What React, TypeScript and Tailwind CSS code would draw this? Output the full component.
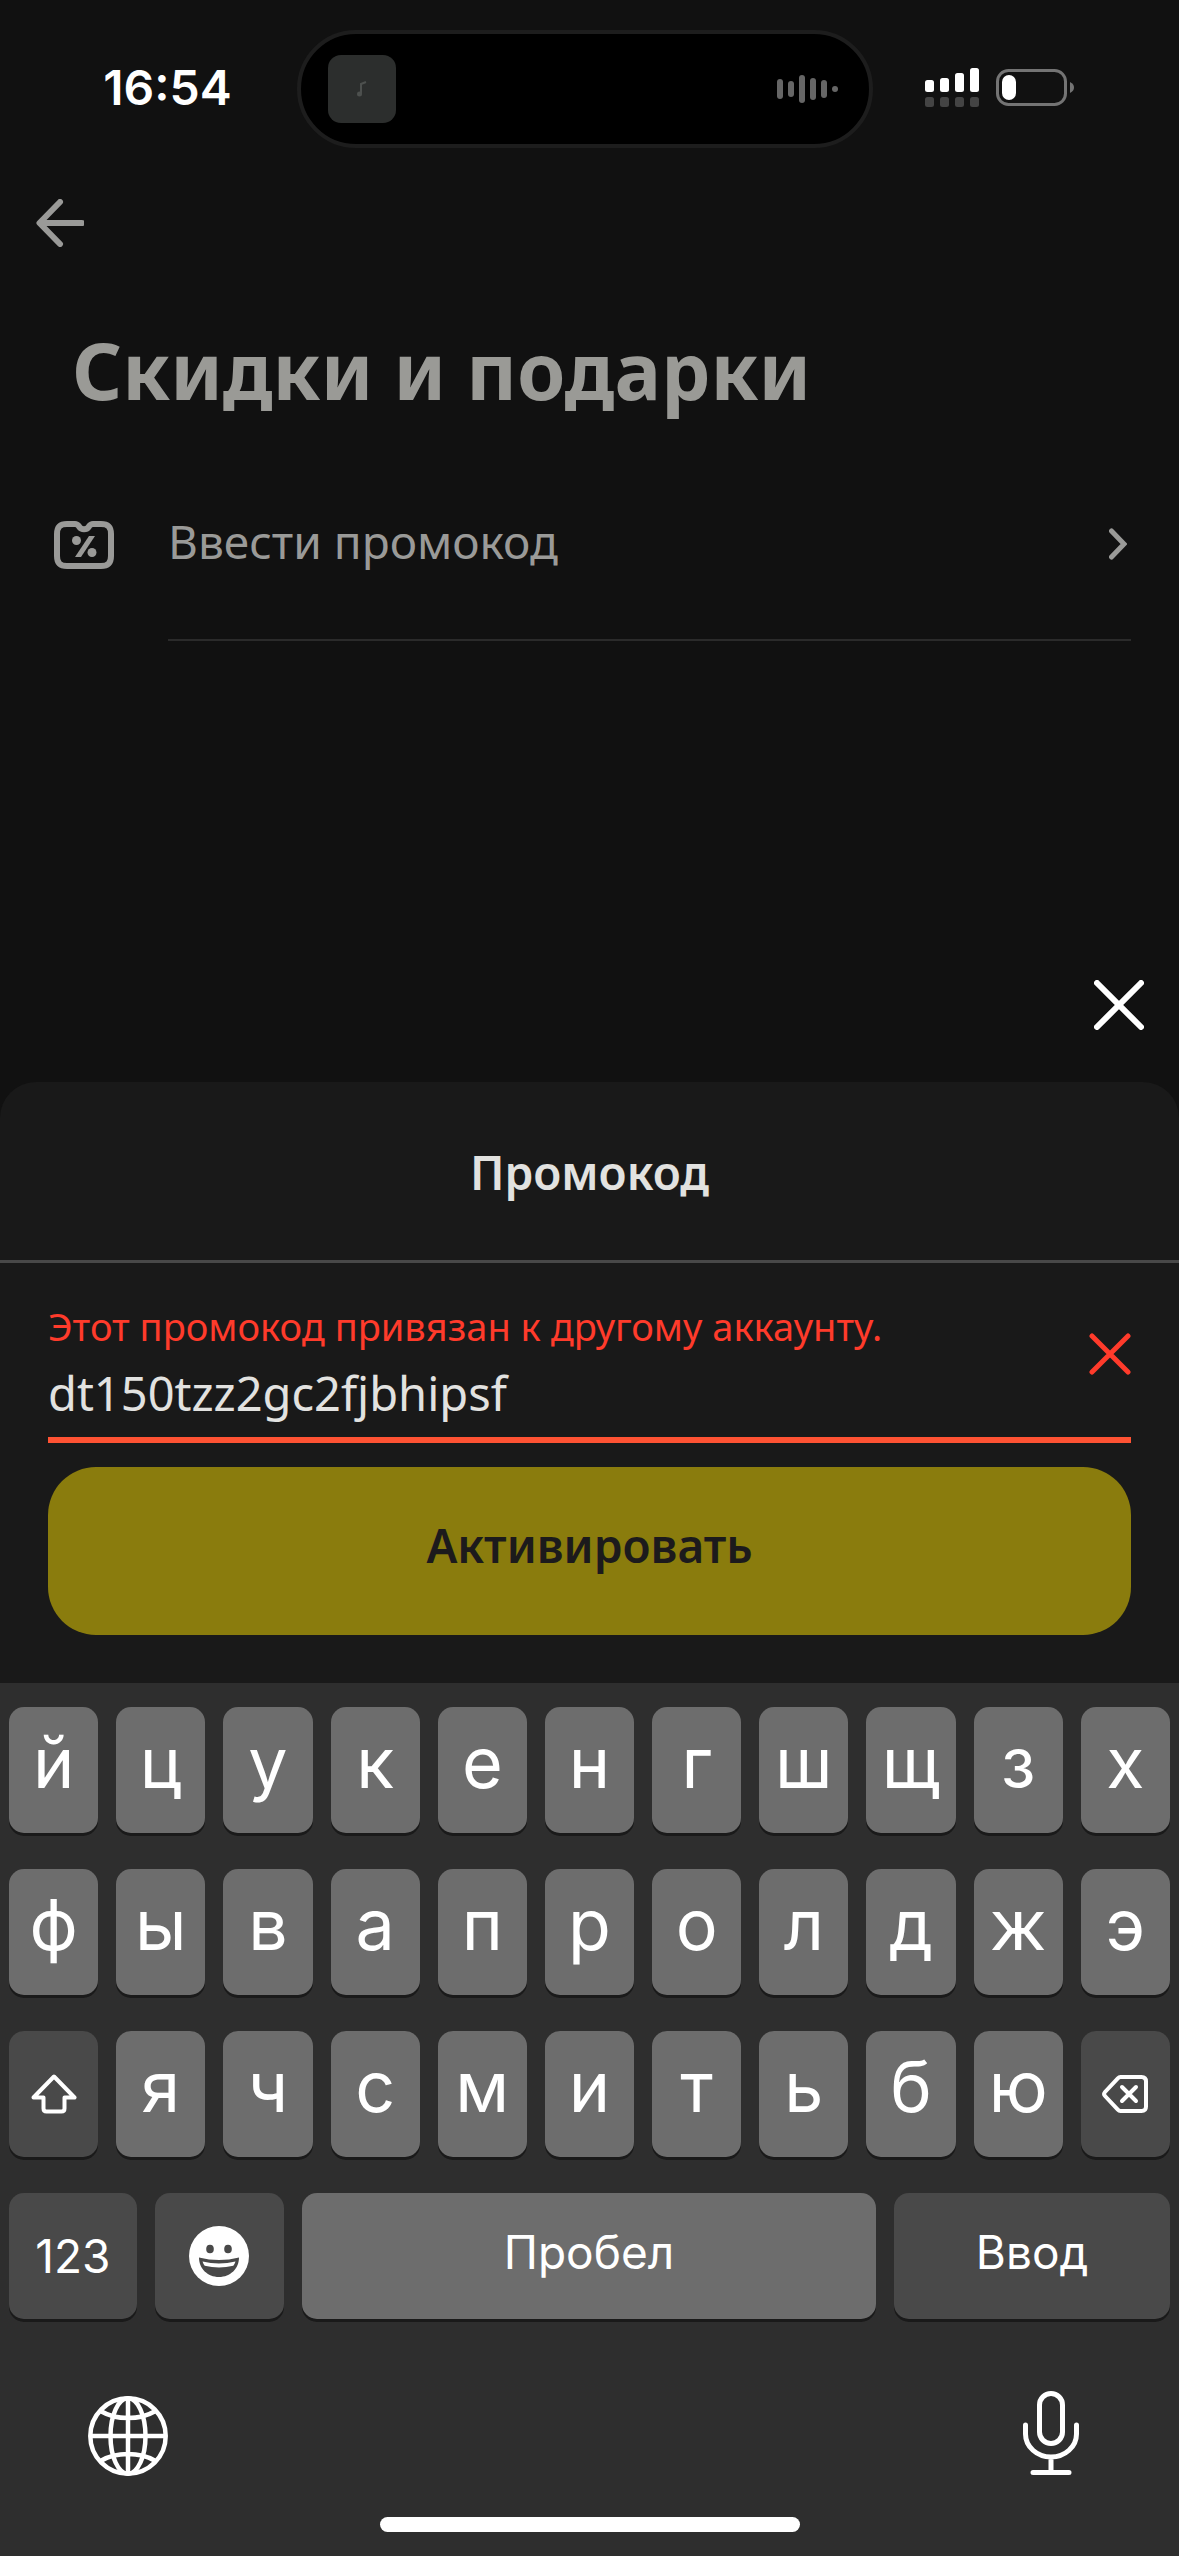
import React, { useState } from "react";
import clsx from "clsx";

const LETTER_ROWS = [
  ["й", "ц", "у", "к", "е", "н", "г", "ш", "щ", "з", "х"],
  ["ф", "ы", "в", "а", "п", "р", "о", "л", "д", "ж", "э"],
];
const LAST_LETTER_ROW = ["я", "ч", "с", "м", "и", "т", "ь", "б", "ю"];

interface KeyProps {
  children: React.ReactNode;
  variant?: "letter" | "space" | "dark";
  label?: string;
  onClick?: () => void;
}

function Key({ children, variant = "letter", label, onClick }: KeyProps) {
  return (
    <button
      type="button"
      aria-label={label}
      onClick={onClick}
      className={clsx(
        "flex h-[126px] min-w-0 items-center justify-center rounded-[15px] text-white shadow-[0_3px_0_#1a1a1a]",
        variant === "letter" && "bg-[#6d6d6d] pb-[14px] text-[70px] leading-none",
        variant === "space" && "bg-[#6d6d6d] pb-2 text-[46px] leading-none",
        variant === "dark" && "bg-[#494949] text-[46px] leading-none"
      )}
    >
      {children}
    </button>
  );
}

function StatusBar() {
  return (
    <div className="grid grid-cols-[297fr_576fr_306fr] items-center pt-[30px] font-[Inter,sans-serif]">
      <span className="pb-0.5 pl-[38px] text-center text-[48px] leading-none font-semibold text-white">16:54</span>
      <div className="flex h-[118px] items-center justify-between rounded-full border-4 border-[#1d1d1d] bg-black pr-[30px] pl-[27px]">
        <div className="flex size-[68px] items-center justify-center rounded-[13px] bg-[#2c2e2d]">
          <svg viewBox="0 0 12 18" className="h-[18px] w-3" fill="none" stroke="#4d504e" strokeWidth="2">
            <path d="M5 14V4l5-2" />
            <circle cx="3.500" cy="14" r="1.500" fill="#4d504e" />
          </svg>
        </div>
        <svg viewBox="0 0 62 28" className="h-7 w-[62px]" fill="#666">
          <rect x="0" y="4" width="6" height="20" rx="3" />
          <rect x="11" y="6" width="6" height="16" rx="3" />
          <rect x="22" y="0" width="6" height="28" rx="3" />
          <rect x="33" y="3" width="6" height="22" rx="3" />
          <rect x="44" y="5" width="6" height="18" rx="3" />
          <circle cx="58" cy="14" r="3" />
        </svg>
      </div>
      <div className="flex items-center gap-[17px] pb-1 pl-[52px]">
        <svg viewBox="0 0 54 39" className="h-[39px] w-[54px]">
          <g fill="#fff">
            <rect x="0" y="12" width="9" height="12" rx="2.500" />
            <rect x="15" y="10" width="9" height="14" rx="2.500" />
            <rect x="30" y="5" width="9" height="19" rx="2.500" />
            <rect x="45" y="0" width="9" height="24" rx="2.500" />
          </g>
          <g fill="#444">
            <rect x="0" y="29" width="9" height="10" rx="2.500" />
            <rect x="15" y="29" width="9" height="10" rx="2.500" />
            <rect x="30" y="29" width="9" height="10" rx="2.500" />
            <rect x="45" y="29" width="9" height="10" rx="2.500" />
          </g>
        </svg>
        <svg viewBox="0 0 78 37" className="h-[37px] w-[78px]">
          <rect x="1.500" y="1.500" width="68" height="34" rx="11" fill="none" stroke="#747474" strokeWidth="3" />
          <rect x="6" y="6" width="14" height="25" rx="7" fill="#fff" />
          <path d="M74 13c3 1.500 4 3.500 4 5.500s-1 4-4 5.500z" fill="#747474" />
        </svg>
      </div>
    </div>
  );
}

function PromoIcon() {
  return (
    <svg viewBox="0 0 60 48" className="h-12 w-[60px]" fill="none" stroke="#9a9a98" strokeWidth="6">
      <path
        d="M13 3h8c2.500 0 3 1 4.200 2.700a5.800 5.800 0 0 0 9.600 0C36 4 36.500 3 39 3h8c7 0 10 3 10 10v22c0 7-3 10-10 10H13C6 45 3 42 3 35V13C3 6 6 3 13 3z"
        strokeLinejoin="round"
      />
      <path d="M35 15h6L27 36h-6z" fill="#9a9a98" stroke="none" />
      <circle cx="22.500" cy="19.500" r="4.500" fill="#9a9a98" stroke="none" />
      <circle cx="38" cy="31.500" r="4.500" fill="#9a9a98" stroke="none" />
    </svg>
  );
}

function ShiftIcon() {
  return (
    <svg viewBox="0 0 46 40" className="h-10 w-[46px]" fill="none" stroke="#fff" strokeWidth="4" strokeLinejoin="round">
      <path d="M23 2.500 43.500 23.500H33.500V34.500q0 3-3 3H15.500q-3 0-3-3V23.500H2.500z" />
    </svg>
  );
}

function BackspaceIcon() {
  return (
    <svg viewBox="0 0 46 38" className="h-[38px] w-[46px]" fill="none" stroke="#fff" strokeWidth="4" strokeLinecap="round" strokeLinejoin="round">
      <path d="M18.500 2H39.500q4.500 0 4.500 4.500v25q0 4.500-4.500 4.500H18.500q-1.500 0-2.700-1.300L3 21q-1.800-2 0-4L15.800 3.300Q17 2 18.500 2z" />
      <path d="m20 12 14 14M34 12 20 26" />
    </svg>
  );
}

function SmileIcon() {
  return (
    <svg viewBox="0 0 60 60" className="size-[60px]">
      <circle cx="30" cy="30" r="30" fill="#fff" />
      <g fill="#494949">
        <ellipse cx="21" cy="23" rx="3.800" ry="4.300" />
        <ellipse cx="39" cy="23" rx="3.800" ry="4.300" />
        <path d="M10 31.500q20 5 40 0c0 11-8.500 19.500-20 19.500S10 42.500 10 31.500z" />
      </g>
      <path d="M13.500 35.500q16.500 4 33 0-1 3-2.200 4.300-14.300 3.500-28.600 0Q14.500 38.500 13.500 35.500z" fill="#fff" />
    </svg>
  );
}

function GlobeIcon() {
  return (
    <svg viewBox="0 0 80 80" className="size-20" fill="none" stroke="#fff" strokeWidth="4.500">
      <circle cx="40" cy="40" r="37.700" />
      <ellipse cx="40" cy="40" rx="17.500" ry="37.700" />
      <path d="M40 2v76M2 40h76M13.500 15.500q11 6.500 26.500 6.500t26.500-6.500M13.500 64.500Q24.500 58 40 58t26.500 6.500" />
    </svg>
  );
}

function MicIcon() {
  return (
    <svg viewBox="0 0 56 84" className="h-[84px] w-14" fill="none" stroke="#fff" strokeWidth="5" strokeLinecap="round">
      <rect x="16.500" y="2.500" width="23" height="50" rx="11.500" />
      <path d="M2.500 34v9a25.500 23 0 0 0 51 0v-9M28 66v15M10 81.500h36" />
    </svg>
  );
}

function PromoSheet() {
  const [code, setCode] = useState("dt150tzz2gc2fjbhipsf");

  return (
    <section className="rounded-t-[36px] bg-[#191919]">
      <h2 className="flex h-[181px] items-center justify-center border-b-[3px] border-[#484848] pt-0.5 text-[46px] leading-none font-semibold text-[#e2e2e0]">
        Промокод
      </h2>
      <form className="px-12 pt-10 pb-12" onSubmit={(e) => e.preventDefault()}>
        <div className="flex items-start border-b-[6px] border-[#ff5233]">
          <div className="min-w-0 flex-1">
            <label htmlFor="promo" className="block text-[38px] leading-[46px] text-[#ff3b2b]">
              Этот промокод привязан к другому аккаунту.
            </label>
            <input
              id="promo"
              type="text"
              value={code}
              onChange={(e) => setCode(e.target.value)}
              className="block h-[88px] w-full bg-transparent text-[47px] text-[#e2e2e0] outline-none"
            />
          </div>
          <button type="button" aria-label="Очистить" onClick={() => setCode("")} className="mt-[30px]">
            <svg viewBox="0 0 42 42" className="size-[42px]" stroke="#ff3b2b" strokeWidth="5" strokeLinecap="round">
              <path d="m3 3 36 36M39 3 3 39" />
            </svg>
          </button>
        </div>
        <button
          type="submit"
          className="mt-6 flex h-[168px] w-full items-center justify-center rounded-[48px] bg-[#8a7c0d] pb-3 text-[46px] leading-none font-semibold text-[#1c1a1c]"
        >
          Активировать
        </button>
      </form>
    </section>
  );
}

function Keyboard() {
  return (
    <section className="bg-[#2e2e2e] pt-6 font-[Inter,sans-serif]">
      <div className="flex flex-col gap-9 px-[9px]">
        {LETTER_ROWS.map((row) => (
          <div key={row[0]} className="grid grid-cols-11 gap-[18px]">
            {row.map((letter) => (
              <Key key={letter}>{letter}</Key>
            ))}
          </div>
        ))}
        <div className="grid grid-cols-11 gap-[18px]">
          <Key variant="dark" label="Shift">
            <ShiftIcon />
          </Key>
          {LAST_LETTER_ROW.map((letter) => (
            <Key key={letter}>{letter}</Key>
          ))}
          <Key variant="dark" label="Удалить">
            <BackspaceIcon />
          </Key>
        </div>
        <div className="grid grid-cols-[128fr_129fr_575fr_276fr] gap-[18px]">
          <Key variant="dark">123</Key>
          <Key variant="dark" label="Эмодзи">
            <SmileIcon />
          </Key>
          <Key variant="space">Пробел</Key>
          <Key variant="dark">
            <span className="pb-2">Ввод</span>
          </Key>
        </div>
      </div>
      <div className="flex h-[198px] items-center justify-between px-[88px] pt-9">
        <button type="button" aria-label="Язык">
          <GlobeIcon />
        </button>
        <button type="button" aria-label="Диктовка" className="flex w-20 justify-center pb-1.5">
          <MicIcon />
        </button>
      </div>
      <div className="pb-6">
        <div className="mx-auto h-[15px] w-[420px] rounded-full bg-white" />
      </div>
    </section>
  );
}

export default function App() {
  return (
    <div className="flex min-h-screen flex-col bg-[#111] font-['Noto_Sans',sans-serif]">
      <StatusBar />

      <header className="px-9 pt-[51px]">
        <button type="button" aria-label="Назад" className="block">
          <svg viewBox="0 0 48 48" className="size-12" fill="none" stroke="#9a9a98" strokeWidth="6" strokeLinecap="round" strokeLinejoin="round">
            <path d="M46 24H4M24 3 3.500 24 24 45" />
          </svg>
        </button>
      </header>

      <main>
        <h1 className="px-[72px] pt-[75px] text-[78px] leading-[96px] font-bold text-[#9a9a96]">
          Скидки и подарки
        </h1>
        <button type="button" className="mt-[30px] flex h-[193px] w-full items-center gap-[54px] pr-12 pl-[54px] text-left">
          <PromoIcon />
          <span className="flex h-full flex-1 items-center justify-between border-b-2 border-[#2b2b2b] pr-1">
            <span className="pb-1.5 text-[46px] leading-none text-[#9a9a98]">Ввести промокод</span>
            <svg viewBox="0 0 18 32" className="h-8 w-[18px]" fill="none" stroke="#9a9a98" strokeWidth="5" strokeLinecap="round">
              <path d="m2.500 3 12.500 13L2.500 29" />
            </svg>
          </span>
        </button>
      </main>

      <div className="flex flex-1 items-end justify-end pr-[35px] pb-[52px]">
        <button type="button" aria-label="Закрыть">
          <svg viewBox="0 0 50 50" className="size-[50px]" stroke="#fff" strokeWidth="6" strokeLinecap="round">
            <path d="m3 3 44 44M47 3 3 47" />
          </svg>
        </button>
      </div>

      <PromoSheet />
      <Keyboard />
    </div>
  );
}
